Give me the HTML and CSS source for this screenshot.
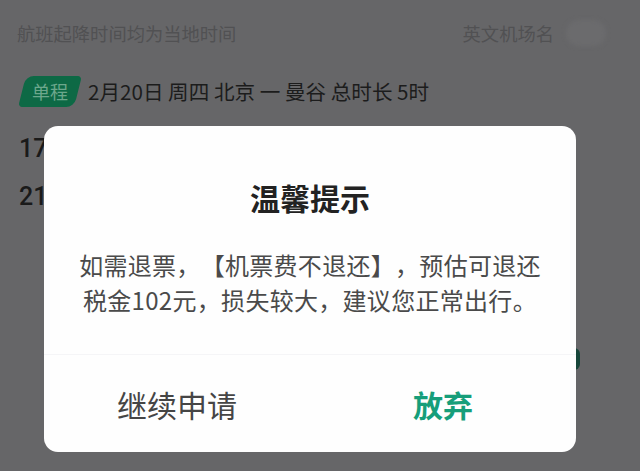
FILE: index.html
```html
<!DOCTYPE html>
<html lang="zh-CN">
<head>
<meta charset="utf-8">
<title>温馨提示</title>
<link rel="stylesheet" href="styles.css">
</head>
<body>
<div class="page">
  <div class="topbar">
    <span class="note">航班起降时间均为当地时间</span>
    <div class="switch-wrap">
      <span class="note">英文机场名</span>
      <span class="switch"></span>
    </div>
  </div>
  <div class="trip">
    <span class="tag"><span class="tag-text">单程</span></span>
    <span class="trip-text">2月20日 周四 北京 一 曼谷 总时长 5时</span>
  </div>
  <div class="times">
    <div class="time">17</div>
    <div class="time">21</div>
  </div>
  <div class="action-row">
    <span class="action-btn"></span>
  </div>
</div>

<div class="dialog">
  <div class="dialog-title">温馨提示</div>
  <div class="dialog-body">
    <p>如需退票，【机票费不退还】，预估可退还</p>
    <p>税金102元，损失较大，建议您正常出行。</p>
  </div>
  <div class="dialog-footer">
    <button class="btn btn-continue">继续申请</button>
    <button class="btn btn-abandon">放弃</button>
  </div>
</div>
</body>
</html>
```

FILE: styles.css
```css
* { box-sizing: border-box; }
html, body {
  margin: 0;
  padding: 0;
  width: 640px;
  height: 471px;
  overflow: hidden;
  background: #666668;
  font-family: "Noto Sans CJK SC", "Noto Sans", sans-serif;
  text-spacing-trim: space-all;
}
.page {
  display: flex;
  flex-direction: column;
}
.topbar {
  height: 66px;
  display: flex;
  align-items: center;
  justify-content: space-between;
  padding: 0 34px 0 17px;
}
.note {
  font-size: 18.3px;
  color: #515153;
  line-height: 24px;
}
.switch-wrap {
  display: flex;
  align-items: center;
  gap: 12px;
}
.switch {
  width: 40px;
  height: 26px;
  border-radius: 13px;
  background: #6b6b6d;
  filter: blur(2px);
}
.trip {
  display: flex;
  align-items: center;
  gap: 6px;
  padding-left: 18px;
  height: 50px;
}
.tag {
  position: relative;
  width: 64px;
  height: 31px;
  display: flex;
  align-items: center;
  justify-content: center;
}
.tag::before {
  content: "";
  position: absolute;
  inset: 0 4px;
  background: #0d6945;
  border-radius: 8px 4px 8px 4px;
  transform: skewX(-14deg);
}
.tag-text {
  position: relative;
  font-size: 18px;
  color: #6ca78c;
  line-height: 24px;
}
.trip-text {
  font-size: 20.6px;
  color: #1c1c1c;
  line-height: 28px;
}
.times {
  padding-left: 19px;
  margin-top: 9px;
}
.time {
  font-size: 25px;
  color: #1a1a1a;
  line-height: 48px;
  font-family: "Roboto", "Noto Sans", sans-serif;
  font-weight: 500;
}
.action-row {
  display: flex;
  justify-content: flex-end;
  padding-right: 60px;
  margin-top: 127px;
}
.action-btn {
  width: 80px;
  height: 22px;
  border-radius: 6px;
  background: #17463a;
}
.dialog {
  position: absolute;
  left: 44px;
  top: 126px;
  width: 532px;
  height: 326px;
  background: #fefefe;
  border-radius: 14px;
  display: flex;
  flex-direction: column;
  align-items: stretch;
}
.dialog-title {
  padding-top: 51px;
  text-align: center;
  font-size: 30px;
  line-height: 40px;
  font-weight: 700;
  color: #222222;
}
.dialog-body {
  margin-top: 30px;
  text-align: center;
  font-size: 24px;
  line-height: 35px;
  color: #4a4a4a;
  letter-spacing: 0.3px;
  height: 108px;
  border-bottom: 1px solid #f5f5f7;
}
.dialog-body p { margin: 0; }
.dialog-footer {
  flex: 1;
  display: flex;
}
.btn {
  flex: 1;
  border: 0;
  background: transparent;
  font-family: inherit;
  font-size: 30px;
  line-height: 40px;
  padding: 0;
}
.btn-continue {
  color: #454545;
}
.btn-abandon {
  color: #169e7a;
  font-weight: 700;
}
```
